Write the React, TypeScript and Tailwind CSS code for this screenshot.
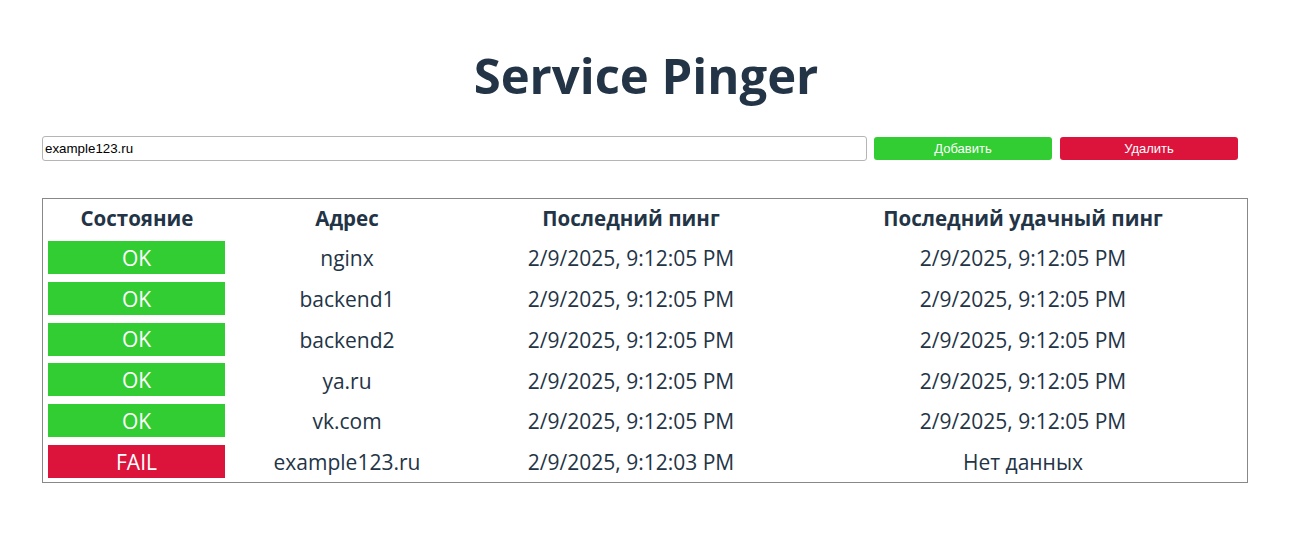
import React from "react";

const rows = [
  { ok: true, addr: "nginx", last: "2/9/2025, 9:12:05 PM", good: "2/9/2025, 9:12:05 PM" },
  { ok: true, addr: "backend1", last: "2/9/2025, 9:12:05 PM", good: "2/9/2025, 9:12:05 PM" },
  { ok: true, addr: "backend2", last: "2/9/2025, 9:12:05 PM", good: "2/9/2025, 9:12:05 PM" },
  { ok: true, addr: "ya.ru", last: "2/9/2025, 9:12:05 PM", good: "2/9/2025, 9:12:05 PM" },
  { ok: true, addr: "vk.com", last: "2/9/2025, 9:12:05 PM", good: "2/9/2025, 9:12:05 PM" },
  { ok: false, addr: "example123.ru", last: "2/9/2025, 9:12:03 PM", good: "Нет данных" },
];

const cols = "grid grid-cols-[188px_232px_336px_1fr]";

export default function App() {
  return (
    <div className="w-[1302px] h-[548px] bg-white text-[#233446] font-['Open_Sans',sans-serif]">
      <h1 className="pt-[40px] pr-[10px] text-center text-[49px] leading-[70px] font-bold">Service Pinger</h1>
      <div className="flex items-center mt-[26px] ml-[42px]">
        <input
          defaultValue="example123.ru"
          className="w-[825px] h-[25px] border border-[#b5b5b5] rounded-[3px] px-[2px] text-[13.33px] text-black font-['Liberation_Sans',sans-serif] outline-none"
        />
        <button className="ml-[7px] w-[178px] h-[23px] rounded-[3px] bg-[#32cd32] text-white text-[13px] font-['Liberation_Sans',sans-serif]">
          Добавить
        </button>
        <button className="ml-[8px] w-[178px] h-[23px] rounded-[3px] bg-[#dc143c] text-white text-[13px] font-['Liberation_Sans',sans-serif]">
          Удалить
        </button>
      </div>
      <div className="mt-[37px] ml-[42px] w-[1206px] border border-[#888888]">
        <div className={`${cols} h-[38px] pt-[1px] items-center text-[20.5px] font-bold text-center`}>
          <div>Состояние</div>
          <div>Адрес</div>
          <div>Последний пинг</div>
          <div>Последний удачный пинг</div>
        </div>
        {rows.map((r, i) => (
          <div key={i} className={`${cols} h-[40.8px] items-start text-[21px] text-center`}>
            <div className="pl-[5px] pr-[6px] pt-[4px]">
              <div
                className={`h-[33px] pt-[2px] flex items-center justify-center text-white ${r.ok ? "bg-[#32cd32]" : "bg-[#dc143c]"}`}
              >
                {r.ok ? "OK" : "FAIL"}
              </div>
            </div>
            <div className="pt-[6px] h-[38px] flex items-center justify-center">{r.addr}</div>
            <div className="pt-[6px] h-[38px] flex items-center justify-center">{r.last}</div>
            <div className="pt-[6px] h-[38px] flex items-center justify-center">{r.good}</div>
          </div>
        ))}
      </div>
    </div>
  );
}
